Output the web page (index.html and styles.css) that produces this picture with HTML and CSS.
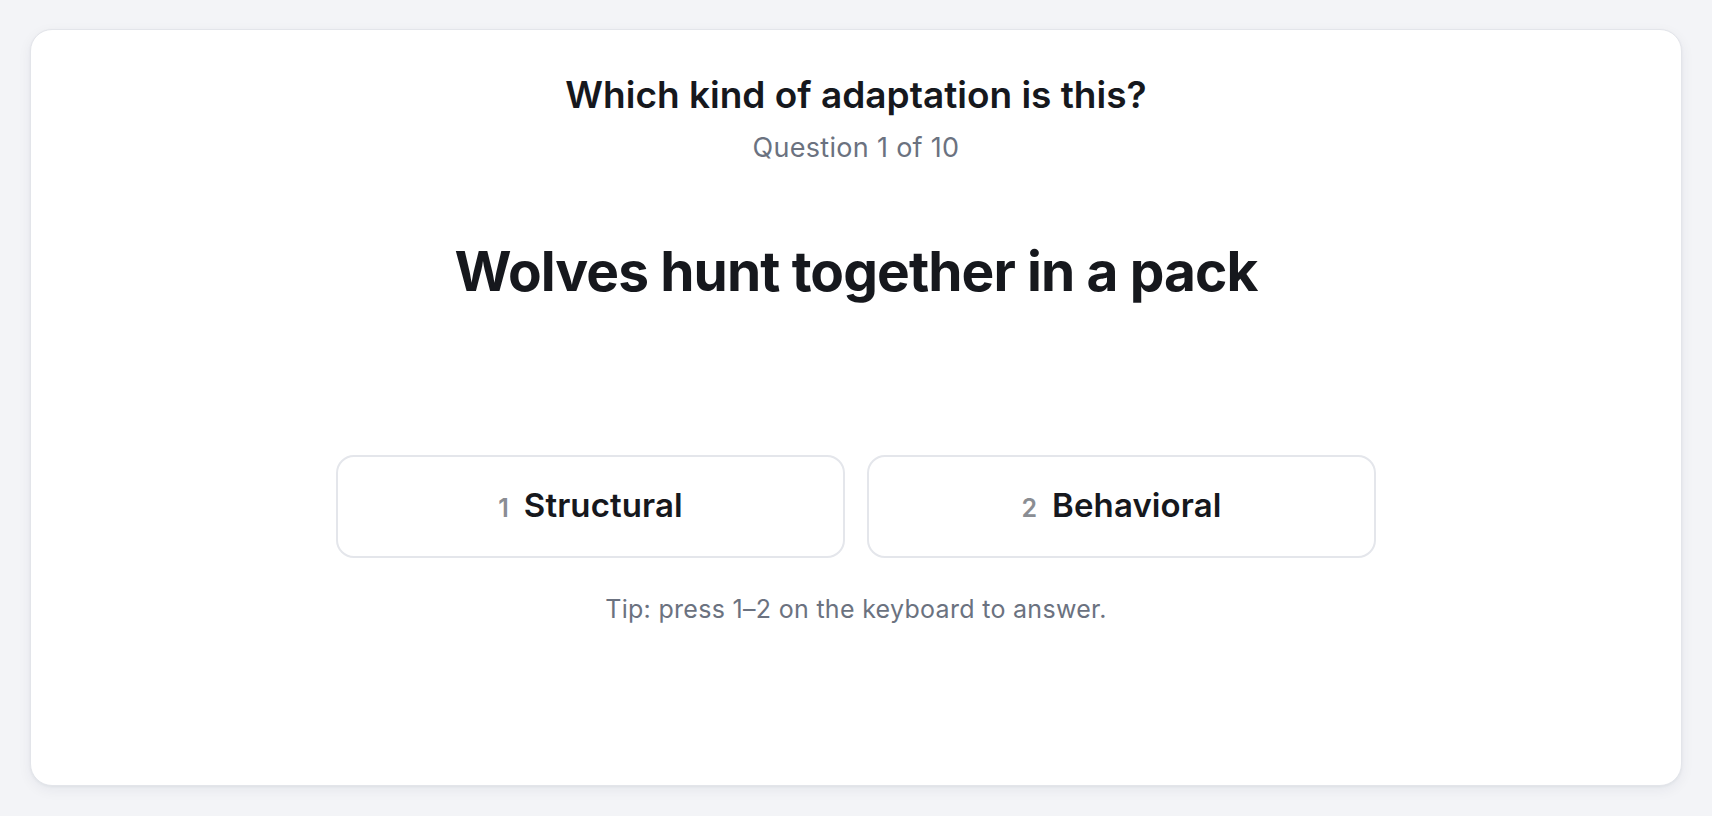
FILE: index.html
```html
<!DOCTYPE html>
<html lang="en">
<head>
  <meta charset="UTF-8" />
  <meta name="viewport" content="width=device-width, initial-scale=1.0" />
  <title>Adaptation Quiz</title>
  <link rel="stylesheet" href="styles.css">
</head>
<body>
  <div class="quiz-card">
    <h1 class="quiz-title">Which kind of adaptation is this?</h1>
    <p class="quiz-progress">Question 1 of 10</p>

    <h2 class="quiz-question">Wolves hunt together in a pack</h2>

    <div class="answers">
      <button class="answer"><span class="key">1</span><span class="label">Structural</span></button>
      <button class="answer"><span class="key">2</span><span class="label">Behavioral</span></button>
    </div>

    <p class="tip">Tip: press 1–2 on the keyboard to answer.</p>
  </div>
</body>
</html>
```

FILE: styles.css
```css
* {
  box-sizing: border-box;
}

body {
  margin: 0;
  padding: 29px 30px 30px 30px;
  height: 100vh;
  background: #f3f4f7;
  font-family: Inter, 'Noto Sans', 'Liberation Sans', sans-serif;
  color: #16181d;
}

.quiz-card {
  height: 100%;
  background: #fff;
  border: 1px solid #e3e5ea;
  border-radius: 22px;
  box-shadow: 0 4px 14px rgba(20, 30, 60, 0.06), 0 1px 3px rgba(20, 30, 60, 0.05);
  display: flex;
  flex-direction: column;
  align-items: center;
  padding: 43px 40px 40px;
  text-align: center;
}

.quiz-title {
  margin: 0;
  font-size: 37px;
  line-height: 1.2;
  font-weight: 600;
}

.quiz-progress {
  margin: 15px 0 0;
  font-size: 27px;
  line-height: 1.2;
  letter-spacing: 0.3px;
  color: #6b7280;
}

.quiz-question {
  margin: 73px 0 0;
  font-size: 55px;
  line-height: 1.2;
  font-weight: 700;
  letter-spacing: -0.9px;
}

.answers {
  margin-top: 151px;
  width: 1040px;
  display: flex;
  gap: 22px;
}

.answer {
  flex: 1;
  height: 103px;
  background: #fff;
  border: 2px solid #e4e6eb;
  border-radius: 18px;
  display: flex;
  align-items: center;
  justify-content: center;
  gap: 15px;
  font-family: inherit;
  color: #16181d;
  cursor: pointer;
}

.answer .key {
  font-size: 25px;
  font-weight: 600;
  color: #8a8d93;
  padding-top: 4px;
}

.answer .label {
  font-size: 33px;
  font-weight: 600;
  letter-spacing: 0.1px;
  padding-bottom: 2px;
}

.tip {
  margin: 36px 0 0;
  font-size: 25px;
  line-height: 1.2;
  letter-spacing: 0.3px;
  color: #6b7280;
}
```
